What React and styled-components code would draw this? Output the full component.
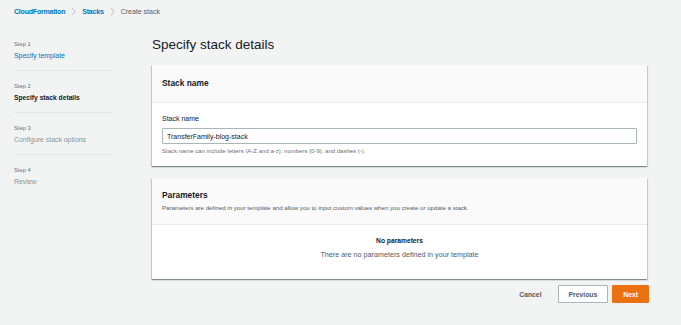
import React from 'react';
import styled, { createGlobalStyle } from 'styled-components';

const GlobalStyle = createGlobalStyle`
	body {
		margin: 0;
		background: #f2f3f3;
		font-family: "Liberation Sans", Arial, sans-serif;
		color: #16191f;
	}
`;

const Page = styled.div`
	width: 681px;
	height: 325px;
	overflow: hidden;
`;

const Breadcrumbs = styled.nav`
	height: 22px;
	display: flex;
	align-items: center;
	gap: 6px;
	padding-left: 14px;
	font-size: 7px;
`;

const Crumb = styled.span`
	color: ${(p) => (p.current ? '#545b64' : '#0073bb')};
	font-weight: ${(p) => (p.current ? 400 : 700)};
	letter-spacing: ${(p) => (p.current ? '0' : '-0.2px')};
`;

const Layout = styled.div`
	display: flex;
	padding-right: 34px;
`;

const Sidebar = styled.aside`
	width: 152px;
	flex-shrink: 0;
	padding: 7px 0 0 14px;
	box-sizing: border-box;
`;

const StepItem = styled.div`
	width: 98px;
	padding: 9.5px 0;
	border-bottom: ${(p) => (p.last ? 'none' : '1px solid #e3e5e6')};
`;

const StepLabel = styled.div`
	font-size: 5.8px;
	line-height: 11px;
	color: #687078;
`;

const StepTitle = styled.div`
	font-size: ${(p) => (p.state === 'active' ? '6.7px' : '6.9px')};
	line-height: 11px;
	white-space: nowrap;
	color: ${(p) => (p.state === 'done' ? '#0073bb' : p.state === 'active' ? '#16191f' : '#879596')};
	font-weight: ${(p) => (p.state === 'active' ? 700 : 400)};
`;

const Main = styled.main`
	flex: 1;
	padding-top: 12px;
`;

const Title = styled.h1`
	margin: 0 0 9px;
	font-size: 13.5px;
	line-height: 22px;
	font-weight: 400;
`;

const Card = styled.section`
	background: #fff;
	box-shadow: 0 1px 1px 0 rgba(0, 28, 36, 0.3), 1px 1px 1px 0 rgba(0, 28, 36, 0.15),
		-1px 1px 1px 0 rgba(0, 28, 36, 0.15);
	margin-bottom: 12px;
`;

const CardHeader = styled.header`
	background: #fafafa;
	border-bottom: 1px solid #eaeded;
	padding: ${(p) => (p.tall ? '11px 10px' : '12px 10px')};
	min-height: ${(p) => (p.tall ? 'auto' : '12px')};
`;

const CardTitle = styled.h2`
	margin: 0;
	font-size: 8.4px;
	line-height: 13px;
	font-weight: 700;
`;

const CardDesc = styled.p`
	margin: 1px 0 0;
	font-size: 6.1px;
	line-height: 10px;
	color: #545b64;
`;

const CardBody = styled.div`
	padding: 10px 10px 10px;
	display: flex;
	flex-direction: column;
	align-items: ${(p) => (p.center ? 'center' : 'stretch')};
	${(p) => p.center && 'padding-bottom: 18px;'}
`;

const FieldLabel = styled.label`
	font-size: 7px;
	line-height: 11px;
	margin-bottom: 4px;
`;

const Input = styled.div`
	height: 16px;
	border: 1px solid #aab7b8;
	border-radius: 1px;
	box-sizing: border-box;
	display: flex;
	align-items: center;
	padding-left: 4px;
	font-size: 7px;
`;

const Hint = styled.div`
	margin-top: 3px;
	font-size: 6px;
	line-height: 9px;
	color: #687078;
`;

const EmptyTitle = styled.div`
	font-size: 6.7px;
	line-height: 12px;
	font-weight: 700;
	color: #16191f;
`;

const EmptyText = styled.div`
	margin-top: 2px;
	font-size: 7.2px;
	line-height: 12px;
	color: #545b64;
`;

const Actions = styled.div`
	display: flex;
	justify-content: flex-end;
	align-items: center;
	gap: 4px;
	margin-top: -6px;
	margin-right: -2px;
`;

const Button = styled.button`
	height: 18px;
	box-sizing: border-box;
	font-family: inherit;
	font-size: 6.8px;
	font-weight: 700;
	padding: 0 10px;
	border-radius: 1px;
	cursor: pointer;
	border: 1px solid
		${(p) => (p.variant === 'primary' ? '#ec7211' : p.variant === 'link' ? 'transparent' : '#aab7b8')};
	background: ${(p) => (p.variant === 'primary' ? '#ec7211' : p.variant === 'link' ? 'transparent' : '#fff')};
	color: ${(p) => (p.variant === 'primary' ? '#fff' : '#545b64')};
	margin-right: ${(p) => (p.variant === 'link' ? '1px' : '0')};
`;

const Chevron = () => (
	<svg width="5" height="9" viewBox="0 0 5 9" fill="none">
		<path d="M0.8 0.6 L4.2 4.5 L0.8 8.4" stroke="#aab7b8" strokeWidth="0.8" />
	</svg>
);

const steps = [
	{ label: 'Step 1', title: 'Specify template', state: 'done' },
	{ label: 'Step 2', title: 'Specify stack details', state: 'active' },
	{ label: 'Step 3', title: 'Configure stack options', state: 'todo' },
	{ label: 'Step 4', title: 'Review', state: 'todo' },
];

export default function App() {
	return (
		<Page>
			<GlobalStyle />
			<Breadcrumbs>
				<Crumb>CloudFormation</Crumb>
				<Chevron />
				<Crumb>Stacks</Crumb>
				<Chevron />
				<Crumb current>Create stack</Crumb>
			</Breadcrumbs>
			<Layout>
				<Sidebar>
					{steps.map((s, i) => (
						<StepItem key={s.label} last={i === steps.length - 1}>
							<StepLabel>{s.label}</StepLabel>
							<StepTitle state={s.state}>{s.title}</StepTitle>
						</StepItem>
					))}
				</Sidebar>
				<Main>
					<Title>Specify stack details</Title>
					<Card>
						<CardHeader>
							<CardTitle>Stack name</CardTitle>
						</CardHeader>
						<CardBody>
							<FieldLabel>Stack name</FieldLabel>
							<Input>TransferFamily-blog-stack</Input>
							<Hint>Stack name can include letters (A-Z and a-z), numbers (0-9), and dashes (-).</Hint>
						</CardBody>
					</Card>
					<Card>
						<CardHeader tall>
							<CardTitle>Parameters</CardTitle>
							<CardDesc>
								Parameters are defined in your template and allow you to input custom values when you create or
								update a stack.
							</CardDesc>
						</CardHeader>
						<CardBody center>
							<EmptyTitle>No parameters</EmptyTitle>
							<EmptyText>There are no parameters defined in your template</EmptyText>
						</CardBody>
					</Card>
					<Actions>
						<Button variant="link">Cancel</Button>
						<Button>Previous</Button>
						<Button variant="primary">Next</Button>
					</Actions>
				</Main>
			</Layout>
		</Page>
	);
}
